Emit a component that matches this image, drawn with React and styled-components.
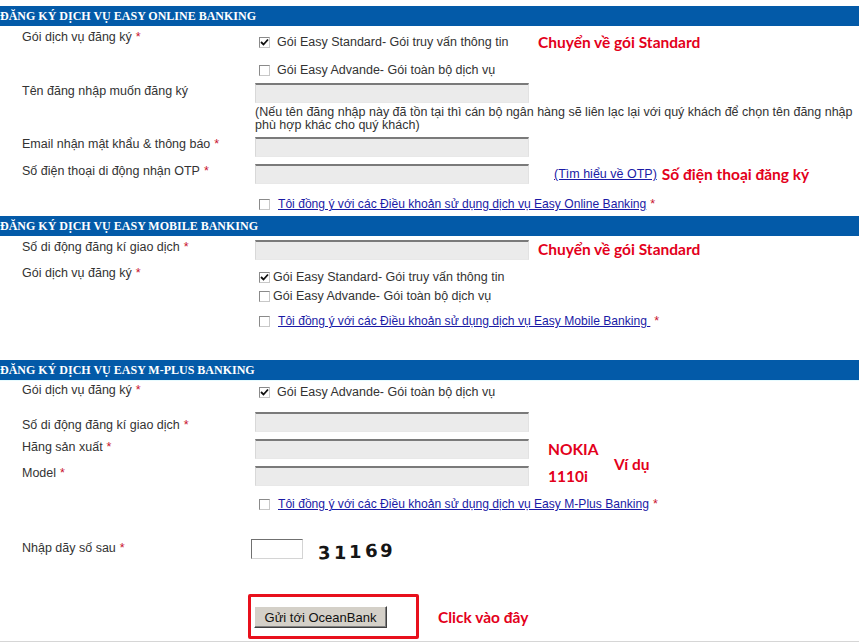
import styled, { createGlobalStyle } from 'styled-components'

const GlobalStyle = createGlobalStyle`
    html, body {
        margin: 0;
        padding: 0;
        background: #ffffff;
    }
    body {
        font-family: "Liberation Sans", Arial, sans-serif;
        font-size: 12.5px;
        color: #333333;
    }
`

const Page = styled.div`
    width: 859px;
    height: 642px;
    padding-top: 6px;
    box-sizing: border-box;
    border-bottom: 1px solid #d6d6d6;
    overflow: hidden;
`

const SectionHeader = styled.div`
    height: 20px;
    background: #035aa8;
    color: #ffffff;
    font-family: "Liberation Serif", "Times New Roman", serif;
    font-weight: bold;
    font-size: 12px;
    line-height: 21px;
    white-space: nowrap;
    margin-bottom: ${p => p.$gap || 0}px;
    border-bottom: ${p => p.$cyan ? '1px solid #e6fbff' : 'none'};
`

const Row = styled.div`
    display: grid;
    grid-template-columns: 255px 283px auto;
    align-items: start;
    margin-top: ${p => p.$mt || 0}px;
    min-height: ${p => p.$h || 0}px;
`

const Label = styled.div`
    padding-left: 22px;
    padding-top: ${p => p.$pt ?? 0}px;
    line-height: 14px;
    color: #333333;
    white-space: nowrap;
`

const Req = styled.span`
    color: #c8102e;
    margin-left: 4px;
`

const Field = styled.div`
    display: flex;
    flex-direction: column;
    gap: ${p => p.$gap || 0}px;
    padding-top: ${p => p.$pt || 0}px;
    grid-column: ${p => p.$wide ? '2 / 4' : 'auto'};
`

const Input = styled.div`
    width: 274px;
    height: 20px;
    box-sizing: border-box;
    background: #ebebeb;
    border-top: 2px solid #7a7a7a;
    border-left: 1px solid #d8d8d8;
    border-right: 1px solid #e2e2e2;
    border-bottom: 1px solid #e8e8e8;
`

const Option = styled.label`
    display: flex;
    align-items: center;
    gap: ${p => p.$gap ?? 7}px;
    height: 14px;
    padding-left: 4px;
    line-height: 14px;
    color: #333333;
    white-space: nowrap;
`

const Box = styled.span`
    width: 11px;
    height: 11px;
    flex: none;
    box-sizing: border-box;
    border: 1px solid #8a8a8a;
    border-right-color: #c8c8c8;
    border-bottom-color: #c8c8c8;
    background: #ffffff;
    display: inline-flex;
    align-items: center;
    justify-content: center;
`

const AgreeLink = styled.a`
    color: #1a1aa6;
    font-size: 12.1px;
    text-decoration: underline;
`

const Help = styled.div`
    margin-top: 3px;
    width: 604px;
    line-height: 13px;
    color: #333333;
`

const Note = styled.div`
    font-family: "Lato", "Open Sans", sans-serif;
    font-weight: bold;
    font-size: 15.5px;
    color: #e3001b;
    white-space: nowrap;
    padding-left: ${p => p.$pl || 0}px;
    padding-top: ${p => p.$pt || 0}px;
    margin-top: ${p => p.$mt || 0}px;
`

const NoteLine = styled.div`
    display: flex;
    align-items: flex-start;
    gap: ${p => p.$gap || 0}px;
    padding-left: ${p => p.$pl || 0}px;
`

const OtpLink = styled.a`
    color: #1a1aa6;
    text-decoration: underline;
    margin-top: 3px;
    white-space: nowrap;
`

const CaptchaRow = styled.div`
    display: grid;
    grid-template-columns: 251px auto;
    margin-top: ${p => p.$mt || 0}px;
`

const CaptchaField = styled.div`
    display: flex;
    align-items: flex-start;
    gap: 15px;
`

const SmallInput = styled.div`
    width: 52px;
    height: 20px;
    box-sizing: border-box;
    background: #ffffff;
    border-top: 1px solid #707070;
    border-left: 1px solid #707070;
    border-right: 1px solid #d4d4d4;
    border-bottom: 1px solid #d4d4d4;
`

const Captcha = styled.div`
    display: flex;
    align-items: flex-end;
    height: 22px;
    padding-top: 2px;
    font-family: "DejaVu Sans", Verdana, sans-serif;
    font-weight: bold;
    font-size: 18px;
    color: #151515;
    letter-spacing: 3px;
`

const Digit = styled.span`
    display: inline-block;
    transform: translateY(${p => p.$dy || 0}px) rotate(${p => p.$rot || 0}deg);
`

const SubmitRow = styled.div`
    display: flex;
    align-items: center;
    gap: 19px;
    padding-left: 248px;
    margin-top: 31px;
`

const Highlight = styled.div`
    width: 171px;
    height: 45px;
    box-sizing: border-box;
    border: 3px solid #e8101c;
    border-radius: 2px;
    padding: 9px 0 0 3px;
`

const Button = styled.button`
    width: 133px;
    height: 22px;
    box-sizing: border-box;
    background: #d4d0c8;
    border: 1px solid;
    border-color: #ffffff #404040 #404040 #ffffff;
    box-shadow: inset -1px -1px 0 #808080;
    font-family: "Liberation Sans", Arial, sans-serif;
    font-size: 13px;
    color: #111111;
    padding: 0;
`

function Check({ checked }) {
    return (
        <Box>
            {checked && (
                <svg width="9" height="9" viewBox="0 0 9 9">
                    <path d="M1 4 L3.5 6.5 L8 1.5" stroke="#111" strokeWidth="1.8" fill="none" />
                </svg>
            )}
        </Box>
    )
}

function Agree({ children, mt, h }) {
    return (
        <Row $mt={mt} $h={h}>
            <div />
            <Field $wide>
                <Option $gap={8}>
                    <Check />
                    <span>
                        <AgreeLink href="#">{children}</AgreeLink>
                        <Req>*</Req>
                    </span>
                </Option>
            </Field>
        </Row>
    )
}

export default function App() {
    return (
        <>
            <GlobalStyle />
            <Page>
                <SectionHeader $gap={4}>ĐĂNG KÝ DỊCH VỤ EASY ONLINE BANKING</SectionHeader>

                <Row $h={50}>
                    <Label>Gói dịch vụ đăng ký<Req>*</Req></Label>
                    <Field $gap={14} $pt={5}>
                        <Option><Check checked />Gói Easy Standard- Gói truy vấn thông tin</Option>
                        <Option><Check />Gói Easy Advande- Gói toàn bộ dịch vụ</Option>
                    </Field>
                    <Note $pt={3}>Chuyển về gói Standard</Note>
                </Row>

                <Row $mt={3}>
                    <Label $pt={1}>Tên đăng nhập muốn đăng ký</Label>
                    <Field>
                        <Input />
                        <Help>
                            (Nếu tên đăng nhập này đã tồn tại thì cán bộ ngân hàng sẽ liên lạc lại với quý khách để chọn tên đăng nhập phù hợp khác cho quý khách)
                        </Help>
                    </Field>
                </Row>

                <Row $mt={5}>
                    <Label>Email nhận mật khẩu &amp; thông báo<Req>*</Req></Label>
                    <Field><Input /></Field>
                </Row>

                <Row $mt={7}>
                    <Label>Số điện thoại di động nhận OTP<Req>*</Req></Label>
                    <Field><Input /></Field>
                    <NoteLine $pl={16} $gap={5}>
                        <OtpLink href="#">(Tìm hiểu về OTP)</OtpLink>
                        <Note $pt={1}>Số điện thoại đăng ký</Note>
                    </NoteLine>
                </Row>

                <Agree mt={13} h={19}>Tôi đồng ý với các Điều khoản sử dụng dịch vụ Easy Online Banking</Agree>

                <SectionHeader $gap={4}>ĐĂNG KÝ DỊCH VỤ EASY MOBILE BANKING</SectionHeader>

                <Row>
                    <Label>Số di động đăng kí giao dịch<Req>*</Req></Label>
                    <Field><Input /></Field>
                    <Note>Chuyển về gói Standard</Note>
                </Row>

                <Row $mt={6}>
                    <Label>Gói dịch vụ đăng ký<Req>*</Req></Label>
                    <Field $gap={5} $pt={4}>
                        <Option $gap={3}><Check checked />Gói Easy Standard- Gói truy vấn thông tin</Option>
                        <Option $gap={3}><Check />Gói Easy Advande- Gói toàn bộ dịch vụ</Option>
                    </Field>
                </Row>

                <Agree mt={11} h={46}>Tôi đồng ý với các Điều khoản sử dụng dịch vụ Easy Mobile Banking </Agree>

                <SectionHeader $cyan>ĐĂNG KÝ DỊCH VỤ EASY M-PLUS BANKING</SectionHeader>

                <Row>
                    <Label $pt={2}>Gói dịch vụ đăng ký<Req>*</Req></Label>
                    <Field $pt={4}>
                        <Option><Check checked />Gói Easy Advande- Gói toàn bộ dịch vụ</Option>
                    </Field>
                </Row>

                <Row $mt={13}>
                    <Label $pt={6}>Số di động đăng kí giao dịch<Req>*</Req></Label>
                    <Field><Input /></Field>
                </Row>

                <Row $mt={7}>
                    <Label $pt={1}>Hãng sản xuất<Req>*</Req></Label>
                    <Field><Input /></Field>
                    <Note $pl={10} $pt={1}>NOKIA</Note>
                </Row>

                <Row $mt={7}>
                    <Label>Model<Req>*</Req></Label>
                    <Field><Input /></Field>
                    <NoteLine $pl={10} $gap={26}>
                        <Note $pt={1}>1110i</Note>
                        <Note $mt={-11}>Ví dụ</Note>
                    </NoteLine>
                </Row>

                <Agree mt={11} h={18}>Tôi đồng ý với các Điều khoản sử dụng dịch vụ Easy M-Plus Banking</Agree>

                <CaptchaRow $mt={24}>
                    <Label $pt={2}>Nhập dãy số sau<Req>*</Req></Label>
                    <CaptchaField>
                        <SmallInput />
                        <Captcha>
                            <Digit $rot={-3}>3</Digit>
                            <Digit $rot={2}>1</Digit>
                            <Digit $dy={-1}>1</Digit>
                            <Digit $dy={-2} $rot={-4}>6</Digit>
                            <Digit $dy={-2} $rot={3}>9</Digit>
                        </Captcha>
                    </CaptchaField>
                </CaptchaRow>

                <SubmitRow>
                    <Highlight>
                        <Button type="button">Gửi tới OceanBank</Button>
                    </Highlight>
                    <Note>Click vào đây</Note>
                </SubmitRow>
            </Page>
        </>
    )
}
